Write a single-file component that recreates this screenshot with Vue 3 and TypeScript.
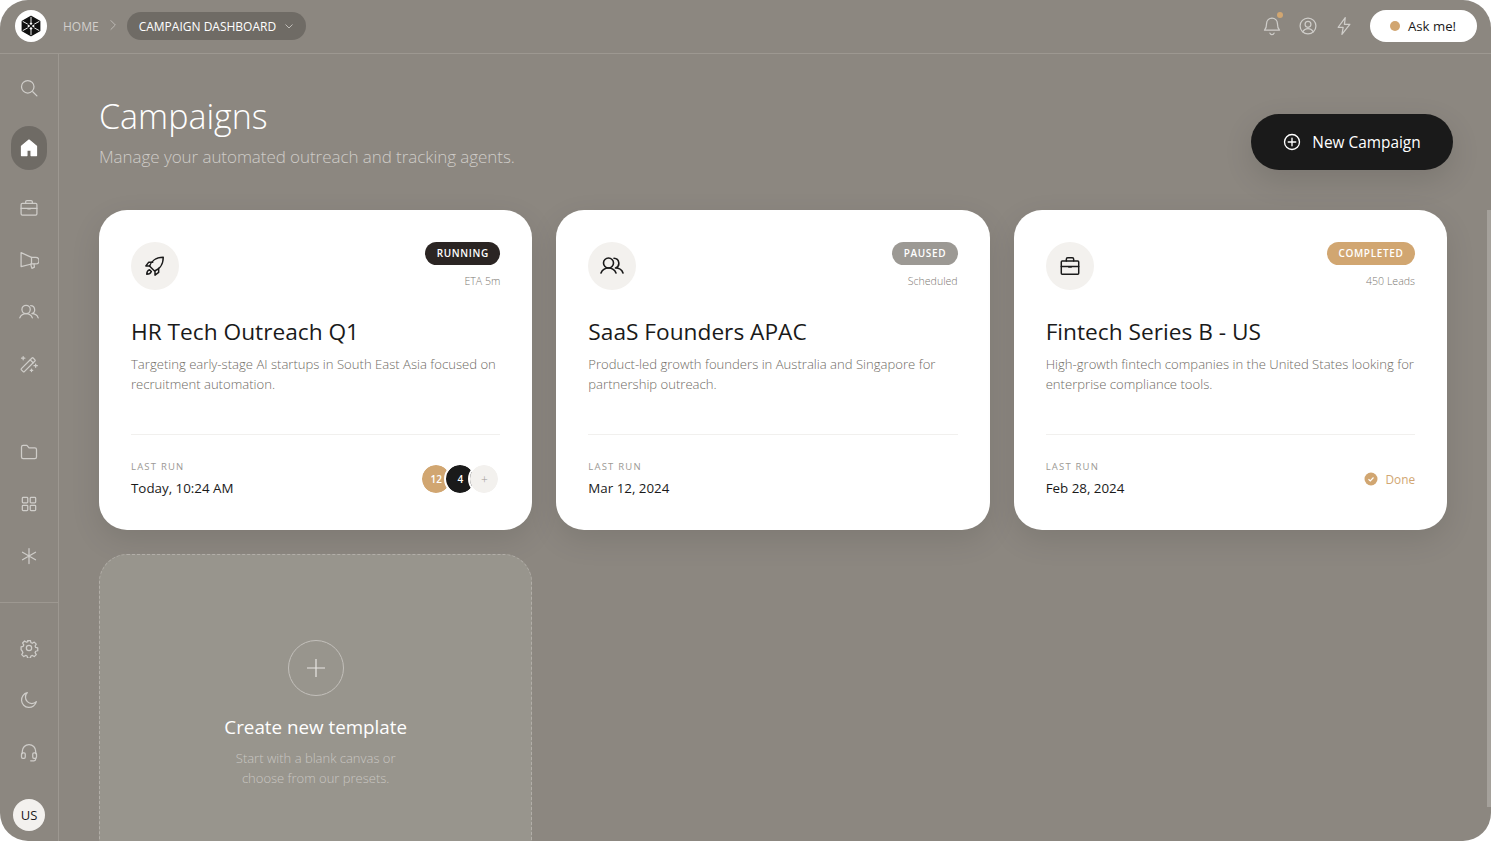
<script setup lang="ts">
interface Campaign {
  title: string;
  text: string;
  status: string;
  tone: string;
  note: string;
  last: string;
  icon: 'rocket' | 'users' | 'case';
}

const campaigns: Campaign[] = [
  {
    title: 'HR Tech Outreach Q1',
    text: 'Targeting early-stage AI startups in South East Asia focused on recruitment automation.',
    status: 'RUNNING',
    tone: 'running',
    note: 'ETA 5m',
    last: 'Today, 10:24 AM',
    icon: 'rocket'
  },
  {
    title: 'SaaS Founders APAC',
    text: 'Product-led growth founders in Australia and Singapore for partnership outreach.',
    status: 'PAUSED',
    tone: 'paused',
    note: 'Scheduled',
    last: 'Mar 12, 2024',
    icon: 'users'
  },
  {
    title: 'Fintech Series B - US',
    text: 'High-growth fintech companies in the United States looking for enterprise compliance tools.',
    status: 'COMPLETED',
    tone: 'completed',
    note: '450 Leads',
    last: 'Feb 28, 2024',
    icon: 'case'
  }
];
</script>

<template>
  <div class="window">
    <header class="topbar">
      <div class="crumbs">
        <div class="logo">
          <svg viewBox="0 0 24 24" width="22" height="22">
            <path d="M12 1.500 21.500 6.800v10.400L12 22.500 2.500 17.200V6.800z" fill="#111" stroke="#111" stroke-width="1.500" stroke-linejoin="round" />
            <path d="M12 2v6M12 16v6M3 7l5.500 3M15.500 14l5.500 3M21 7l-5.500 3M8.500 14 3 17" stroke="#fff" stroke-width="1" />
            <path d="M12 7.500 16 12l-4 4.500L8 12z" fill="#fff" />
            <path d="M9.500 9.500l5 5M14.500 9.500l-5 5" stroke="#111" stroke-width="1.300" />
          </svg>
        </div>
        <span class="home">HOME</span>
        <svg class="sep" viewBox="0 0 24 24" width="14" height="14"><path d="m8 4 8 8-8 8" /></svg>
        <div class="crumb-pill">
          <span>CAMPAIGN DASHBOARD</span>
          <svg viewBox="0 0 24 24" width="12" height="12"><path d="m5 9 7 7 7-7" /></svg>
        </div>
      </div>
      <div class="top-actions">
        <div class="bell">
          <svg class="ic" viewBox="0 0 24 24">
            <path d="M5.500 9a6.500 6.500 0 0 1 13 0c0 4.500 1 6.500 2.500 8H3c1.500-1.500 2.500-3.500 2.500-8z" />
            <path d="M9.500 20.500a2.600 2.600 0 0 0 5 0" />
          </svg>
          <i class="bell-dot"></i>
        </div>
        <svg class="ic" viewBox="0 0 24 24">
          <circle cx="12" cy="12" r="9.500" />
          <circle cx="12" cy="10" r="3.500" />
          <path d="M5.800 19c1.200-2.600 3.400-4 6.200-4s5 1.400 6.200 4" />
        </svg>
        <svg class="ic" viewBox="0 0 24 24">
          <path d="M13.500 2 5 13.500h6L9.500 22 19 10h-6.500z" />
        </svg>
        <button class="ask"><i></i>Ask me!</button>
      </div>
    </header>

    <div class="body">
      <aside class="side">
        <nav class="side-group first">
          <a class="side-item">
            <svg class="ic" viewBox="0 0 24 24"><circle cx="10.500" cy="10.500" r="7.500" /><path d="m16.500 16.500 5 5" /></svg>
          </a>
          <a class="side-item active">
            <svg viewBox="0 0 24 24" width="20" height="20">
              <path d="M12 2.500 3 10v11h6.500v-6.500h5V21H21V10z" fill="#fff" stroke="#fff" stroke-width="1.500" stroke-linejoin="round" />
            </svg>
          </a>
          <a class="side-item">
            <svg class="ic" viewBox="0 0 24 24">
              <rect x="2.500" y="6.500" width="19" height="14" rx="1.500" />
              <path d="M8 6.500V4.500a1.500 1.500 0 0 1 1.500-1.500h5A1.500 1.500 0 0 1 16 4.500v2M2.500 12.500h19M10.500 13h3" />
            </svg>
          </a>
          <a class="side-item">
            <svg class="ic" viewBox="0 0 24 24">
              <path d="M2.500 3.200 15 8.800h5a2.500 2.500 0 0 1 0 8h-5L2.500 20z" />
              <path d="M15 8.800v8M14 17l1.500 5 3-1.500-.5-3.700" />
            </svg>
          </a>
          <a class="side-item">
            <svg class="ic" viewBox="0 0 24 24">
              <circle cx="8.500" cy="9" r="5" />
              <path d="M1 19c1.200-3 4-5 7.500-5s6.300 2 7.500 5" />
              <path d="M14 4.300a5 5 0 0 1 1.500 9.700c3.500 0 6.500 2 7.500 5" />
            </svg>
          </a>
          <a class="side-item">
            <svg class="ic" viewBox="0 0 24 24">
              <rect x="1" y="10.500" width="20" height="5" rx="1" transform="rotate(-45 11 13)" />
              <path d="m13.500 7 3.500 3.500M5 3v4M3 5h4M20 12v4M18 14h4M15 18v3M13.500 19.500h3" />
            </svg>
          </a>
        </nav>
        <nav class="side-group mid">
          <a class="side-item">
            <svg class="ic" viewBox="0 0 24 24">
              <path d="M3 6a2 2 0 0 1 2-2h4.500l2.500 3h7a2 2 0 0 1 2 2v9a2 2 0 0 1-2 2H5a2 2 0 0 1-2-2z" />
            </svg>
          </a>
          <a class="side-item">
            <svg class="ic" viewBox="0 0 24 24">
              <rect x="4" y="4" width="6.500" height="6.500" rx="1" />
              <rect x="13.500" y="4" width="6.500" height="6.500" rx="1" />
              <rect x="4" y="13.500" width="6.500" height="6.500" rx="1" />
              <rect x="13.500" y="13.500" width="6.500" height="6.500" rx="1" />
            </svg>
          </a>
          <a class="side-item">
            <svg class="ic" viewBox="0 0 24 24"><path d="M12 3v18M4.200 7.500l15.600 9M19.800 7.500l-15.600 9" /></svg>
          </a>
        </nav>
        <nav class="side-group end">
          <a class="side-item">
            <svg class="ic" viewBox="0 0 24 24">
              <circle cx="12" cy="12" r="3.200" />
              <path d="M10.300 3h3.400l.6 2.600 1.700.7 2.300-1.400 2.400 2.400-1.400 2.300.7 1.700 2.500.6v3.400l-2.500.6-.7 1.700 1.400 2.300-2.400 2.400-2.300-1.400-1.700.7-.6 2.400h-3.400l-.6-2.400-1.700-.7-2.300 1.400-2.400-2.400 1.400-2.300-.7-1.700L2.500 14v-3.400l2.500-.6.700-1.700-1.400-2.300 2.400-2.400 2.300 1.400 1.700-.7z" stroke-linejoin="round" />
            </svg>
          </a>
          <a class="side-item">
            <svg class="ic" viewBox="0 0 24 24"><path d="M10 3.200A9 9 0 1 0 20.800 14 7.500 7.500 0 0 1 10 3.200z" /></svg>
          </a>
          <a class="side-item">
            <svg class="ic" viewBox="0 0 24 24">
              <path d="M4 14v-3a8 8 0 0 1 16 0v3" />
              <rect x="3" y="13" width="4.500" height="6.500" rx="1.500" />
              <rect x="16.500" y="13" width="4.500" height="6.500" rx="1.500" />
              <path d="M20 19.500v1a2 2 0 0 1-2 2h-4" />
            </svg>
          </a>
          <div class="me">US</div>
        </nav>
      </aside>

      <main class="main">
        <div class="page-head">
          <div>
            <h1>Campaigns</h1>
            <p>Manage your automated outreach and tracking agents.</p>
          </div>
          <button class="new-btn">
            <svg viewBox="0 0 24 24" width="18" height="18">
              <circle cx="12" cy="12" r="10" />
              <path d="M12 7v10M7 12h10" />
            </svg>
            New Campaign
          </button>
        </div>

        <section class="grid">
          <article v-for="c in campaigns" :key="c.title" class="card">
            <div class="card-top">
              <div class="card-icon">
                <svg v-if="c.icon === 'rocket'" viewBox="0 0 24 24" width="22" height="22">
                  <path d="M9 15 6 12c1.500-4 6-9.500 15-9.500 0 9-5.500 13.500-9.500 15z" />
                  <path d="M9.500 8H5l-3 4h4.500M16 14.500V19l-4 3v-4.500M6 16c-2 .8-3 3-3 5 2 0 4.200-1 5-3z" />
                </svg>
                <svg v-else-if="c.icon === 'users'" viewBox="0 0 24 24" width="24" height="24">
                  <circle cx="8.500" cy="9" r="5" />
                  <path d="M1 19c1.200-3 4-5 7.500-5s6.300 2 7.500 5" />
                  <path d="M14 4.300a5 5 0 0 1 1.500 9.700c3.500 0 6.500 2 7.500 5" />
                </svg>
                <svg v-else viewBox="0 0 24 24" width="22" height="22">
                  <rect x="2.500" y="6.500" width="19" height="14.500" rx="1" />
                  <path d="M8 6.500V4.500a1.500 1.500 0 0 1 1.500-1.500h5A1.500 1.500 0 0 1 16 4.500v2M2.500 12.500h19M10.500 13h3" />
                </svg>
              </div>
              <div class="status">
                <span class="badge" :class="c.tone">{{ c.status }}</span>
                <span class="note">{{ c.note }}</span>
              </div>
            </div>
            <h2>{{ c.title }}</h2>
            <p class="desc">{{ c.text }}</p>
            <div class="card-foot">
              <div>
                <div class="last-label">LAST RUN</div>
                <div class="last-value">{{ c.last }}</div>
              </div>
              <div v-if="c.tone === 'running'" class="avatars">
                <span class="av tan">12</span>
                <span class="av dark">4</span>
                <span class="av add">+</span>
              </div>
              <div v-else-if="c.tone === 'completed'" class="done">
                <svg viewBox="0 0 14 14" width="14" height="14">
                  <circle cx="7" cy="7" r="6.500" fill="#d1a671" />
                  <path d="m4.500 7.200 1.800 1.700 3.200-3.400" fill="none" stroke="#fff" stroke-width="1.200" />
                </svg>
                Done
              </div>
            </div>
          </article>

          <article class="card-new">
            <div class="plus-ring">
              <svg viewBox="0 0 24 24" width="24" height="24"><path d="M12 3v18M3 12h18" /></svg>
            </div>
            <h3>Create new template</h3>
            <p>Start with a blank canvas or<br />choose from our presets.</p>
          </article>
        </section>
      </main>
    </div>
    <div class="scroll-thumb"></div>
  </div>
</template>

<style>
html,
body {
  margin: 0;
  background: #fff;
}
</style>

<style scoped>
.window {
  position: relative;
  width: 1491px;
  height: 841px;
  display: flex;
  flex-direction: column;
  overflow: hidden;
  border-radius: 28px;
  background: #8c8780;
  color: #fff;
  font-family: "Open Sans", "Noto Sans", sans-serif;
}

.ic {
  width: 20px;
  height: 20px;
  fill: none;
  stroke: #cfcdc9;
  stroke-width: 1.500;
  stroke-linecap: round;
  stroke-linejoin: round;
}

.topbar {
  flex: none;
  height: 53px;
  box-sizing: content-box;
  display: flex;
  align-items: center;
  justify-content: space-between;
  padding: 0 14px 0 15px;
  border-bottom: 1px solid #9d9891;
}

.crumbs {
  display: flex;
  align-items: center;
  padding-bottom: 1px;
}

.logo {
  width: 32px;
  height: 32px;
  margin-right: 16px;
  display: flex;
  align-items: center;
  justify-content: center;
  border-radius: 50%;
  background: #fff;
}

.home {
  font-size: 12px;
  color: #d2cfcc;
}

.sep {
  margin: 0 7px 2px 7px;
  fill: none;
  stroke: #c3c0bb;
  stroke-width: 1.500;
}

.crumb-pill {
  height: 28px;
  display: flex;
  align-items: center;
  gap: 7px;
  padding: 0 11px 0 12px;
  border-radius: 14px;
  background: #6f6b65;
  font-size: 12px;
}

.crumb-pill svg {
  fill: none;
  stroke: #c9c6c2;
  stroke-width: 1.800;
}

.top-actions {
  display: flex;
  align-items: center;
  gap: 16px;
  padding-bottom: 1px;
}

.bell {
  position: relative;
  height: 20px;
}

.bell-dot {
  position: absolute;
  top: -4px;
  right: -1px;
  width: 6px;
  height: 6px;
  border-radius: 50%;
  background: #d1a671;
}

.ask {
  height: 32px;
  width: 107px;
  display: flex;
  align-items: center;
  gap: 8px;
  padding: 0 0 1px 20px;
  border: 0;
  border-radius: 16px;
  background: #fff;
  color: #1a1a1a;
  font: 13.200px "Open Sans", sans-serif;
}

.ask i {
  width: 10px;
  height: 10px;
  border-radius: 50%;
  background: #d1a671;
}

.body {
  flex: 1;
  min-height: 0;
  display: flex;
}

.side {
  flex: none;
  width: 58px;
  display: flex;
  flex-direction: column;
  border-right: 1px solid #9d9891;
}

.side-group {
  display: flex;
  flex-direction: column;
  align-items: center;
  gap: 8px;
}

.side-group.first {
  padding-top: 12px;
}

.side-group.mid {
  padding: 44px 0 24px;
  border-bottom: 1px solid #9d9891;
}

.side-group.end {
  padding-top: 23px;
}

.side-item {
  width: 36px;
  height: 44px;
  display: flex;
  align-items: center;
  justify-content: center;
  border-radius: 18px;
}

.side-item.active {
  margin: 8px 0;
  background: #6f6b65;
}

.me {
  width: 32px;
  height: 32px;
  margin-top: 17px;
  display: flex;
  align-items: center;
  justify-content: center;
  border-radius: 50%;
  background: #f3f1ee;
  color: #1a1a1a;
  font-size: 13px;
}

.main {
  flex: 1;
  min-width: 0;
  overflow: hidden;
  padding: 39px 44px 0 40px;
}

.page-head {
  display: flex;
  align-items: flex-start;
  justify-content: space-between;
  margin-right: -6px;
  margin-bottom: 40px;
}

h1 {
  margin: 0;
  font-size: 34px;
  line-height: 46px;
  font-weight: 300;
}

.page-head p {
  margin: 6px 0 0;
  font-size: 17px;
  line-height: 24px;
  font-weight: 300;
  letter-spacing: -0.06px;
  color: #cfccc8;
}

.new-btn {
  width: 202px;
  height: 56px;
  margin-top: 21px;
  display: flex;
  align-items: center;
  justify-content: center;
  gap: 11px;
  border: 0;
  border-radius: 28px;
  background: #1a1a1a;
  color: #fff;
  font: 15.400px "Open Sans", sans-serif;
  box-shadow: 0 10px 30px rgba(0, 0, 0, 0.12);
}

.new-btn svg {
  fill: none;
  stroke: #fff;
  stroke-width: 1.800;
  stroke-linecap: round;
}

.grid {
  display: grid;
  grid-template-columns: repeat(3, 1fr);
  gap: 24px;
}

.card {
  height: 320px;
  box-sizing: border-box;
  display: flex;
  flex-direction: column;
  padding: 32px;
  border-radius: 28px;
  background: #fff;
  color: #1a1a1a;
  box-shadow: 0 10px 30px rgba(0, 0, 0, 0.1);
}

.card-top {
  display: flex;
  justify-content: space-between;
  align-items: flex-start;
  margin-bottom: 24px;
}

.card-icon {
  width: 48px;
  height: 48px;
  display: flex;
  align-items: center;
  justify-content: center;
  border-radius: 50%;
  background: #f3f1ee;
}

.card-icon svg {
  fill: none;
  stroke: #1a1a1a;
  stroke-width: 1.600;
  stroke-linecap: round;
  stroke-linejoin: round;
}

.status {
  display: flex;
  flex-direction: column;
  align-items: flex-end;
}

.badge {
  height: 23px;
  box-sizing: border-box;
  display: flex;
  align-items: center;
  padding: 0 11.500px 1px;
  border-radius: 12px;
  font-size: 10px;
  font-weight: 600;
  letter-spacing: 0.650px;
  color: #fff;
}

.badge.running {
  background: #2b2523;
}

.badge.paused {
  background: #9c9994;
}

.badge.completed {
  background: #d1a671;
}

.note {
  margin-top: 8px;
  font-size: 10.600px;
  line-height: 16px;
  font-weight: 300;
  color: #7d7973;
}

h2 {
  margin: 0;
  font-size: 22.700px;
  line-height: 36px;
  font-weight: 400;
}

.desc {
  margin: 4px 0 0;
  font-size: 13.100px;
  line-height: 20px;
  font-weight: 300;
  color: #6f6b65;
}

.card-foot {
  margin-top: auto;
  padding-top: 25px;
  display: flex;
  align-items: center;
  justify-content: space-between;
  border-top: 1px solid #f1f0ee;
}

.last-label {
  font-size: 9.500px;
  line-height: 14px;
  letter-spacing: 1.200px;
  color: #9c9994;
}

.last-value {
  margin-top: 4px;
  font-size: 13.350px;
  line-height: 20px;
}

.avatars {
  display: flex;
  padding-right: 2px;
}

.av {
  width: 28px;
  height: 28px;
  margin-left: -4px;
  display: flex;
  align-items: center;
  justify-content: center;
  border-radius: 50%;
  outline: 2px solid #fff;
  font-size: 10px;
  font-weight: 600;
  color: #fff;
}

.av.tan {
  background: #d1a671;
}

.av.dark {
  background: #1a1a1a;
}

.av.add {
  background: #f3f1ee;
  color: #9c9994;
  font-size: 12px;
  font-weight: 300;
}

.done {
  display: flex;
  align-items: center;
  gap: 7px;
  font-size: 11.800px;
  font-weight: 500;
  color: #d1a671;
}

.card-new {
  height: 320px;
  box-sizing: border-box;
  display: flex;
  flex-direction: column;
  align-items: center;
  padding-top: 85px;
  border: 1px dashed #b2aea8;
  border-radius: 28px;
  background: #98958d;
  text-align: center;
}

.plus-ring {
  width: 56px;
  height: 56px;
  box-sizing: border-box;
  display: flex;
  align-items: center;
  justify-content: center;
  border: 1px solid #c3c0bb;
  border-radius: 50%;
}

.plus-ring svg {
  fill: none;
  stroke: #e8e6e3;
  stroke-width: 1.200;
}

h3 {
  margin: 16px 0 0;
  font-size: 18.800px;
  line-height: 30px;
  font-weight: 400;
}

.card-new p {
  margin: 6px 0 0;
  font-size: 13px;
  line-height: 20px;
  font-weight: 300;
  color: #c9c6c2;
}

.scroll-thumb {
  position: absolute;
  right: 0;
  top: 210px;
  width: 4px;
  height: 597px;
  background: #a5a19b;
}
</style>
